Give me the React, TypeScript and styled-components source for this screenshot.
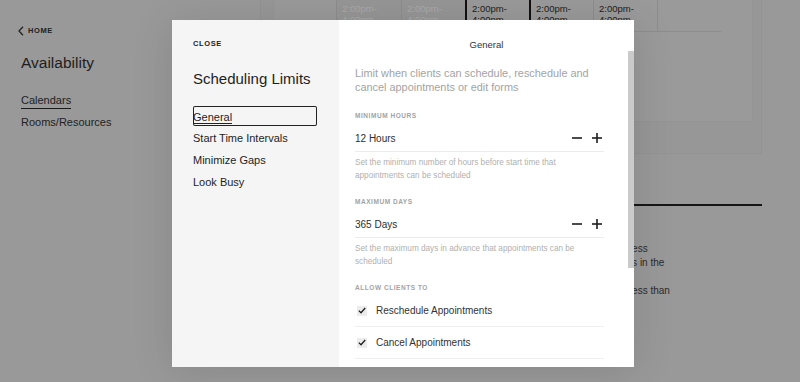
import styled, { createGlobalStyle, css } from "styled-components";

const GlobalStyle = createGlobalStyle`
  html, body {
    margin: 0;
    padding: 0;
    height: 100%;
    overflow: hidden;
  }
  body {
    font-family: "Liberation Sans", Arial, sans-serif;
    color: #222;
  }
  * { box-sizing: border-box; }
`;

/* ---------- background page (already dimmed by the modal backdrop) ---------- */

const Page = styled.div`
  display: flex;
  height: 100vh;
  background: #999;
  overflow: hidden;
`;

const Sidebar = styled.aside`
  width: 220px;
  flex-shrink: 0;
  padding: 26px 0 0 18px;
  color: #1e1e1e;
`;

const BackLink = styled.div`
  display: flex;
  align-items: center;
  gap: 4px;
  font-size: 7.5px;
  font-weight: 700;
  letter-spacing: 0.6px;
  line-height: 10px;
  color: #222;
`;

const PageTitle = styled.h1`
  margin: 18px 0 0 3px;
  font-size: 15.5px;
  font-weight: 400;
  line-height: 18px;
`;

const SideNav = styled.nav`
  display: flex;
  flex-direction: column;
  align-items: flex-start;
  gap: 6px;
  margin: 21px 0 0 3px;
`;

const SideNavItem = styled.span<{ $active?: boolean }>`
  font-size: 11px;
  line-height: 14px;
  color: #222;
  ${({ $active }) =>
    $active &&
    css`
      border-bottom: 1.5px solid #1a1a1a;
      padding-bottom: 1px;
    `}
`;

const Main = styled.main`
  width: 542px;
  padding-left: 40px;
`;

const OuterPanel = styled.section`
  margin-top: -40px;
  padding: 12px 8px 31px 12px;
  background: #979797;
  border: 1px solid #939393;
`;

const InnerPanel = styled.div`
  padding: 0 0 89px 62px;
  background: #9a9a9a;
  border: 1px solid #949494;
`;

const SlotGrid = styled.div`
  display: grid;
  grid-template-columns: repeat(6, 64px);
  width: 385px;
  border: 1px solid #8d8d8d;
  border-top: none;
`;

const Slot = styled.div<{ $state: "off" | "on" | "empty"; $marked?: boolean }>`
  height: 57px;
  display: flex;
  flex-direction: column;
  justify-content: flex-end;
  padding: 0 0 6px 5px;
  font-size: 9.5px;
  line-height: 11px;
  border-left: ${({ $marked }) => ($marked ? "2px solid #111" : "1px solid #8d8d8d")};
  color: ${({ $state }) => ($state === "off" ? "#aaa" : "#1c1c1c")};
  background: ${({ $state }) => ($state === "off" ? "#969696" : "#9a9a9a")};
  &:first-child {
    border-left: none;
  }
`;

const Divider = styled.hr`
  margin: 50px 0 0 0;
  border: none;
  height: 2px;
  background: #161616;
`;

const SettingRow = styled.div`
  display: grid;
  grid-template-columns: 356px 1fr;
  margin-top: 36px;
  font-size: 10px;
  line-height: 14px;
  color: #2a2a2a;
`;

const SettingName = styled.div`
  font-size: 11px;
`;

const SettingText = styled.div`
  white-space: nowrap;
  p {
    margin: 0 0 14px;
  }
`;

/* ---------- modal ---------- */

const Dialog = styled.div`
  position: fixed;
  left: 172px;
  top: 20px;
  width: 462px;
  height: 347px;
  display: grid;
  grid-template-columns: 167px 1fr;
  box-shadow: 0 4px 40px rgba(0, 0, 0, 0.12);
`;

const DialogNav = styled.div`
  background: #f5f5f5;
  padding: 19px 0 0 21px;
`;

const CloseButton = styled.button`
  display: block;
  border: none;
  background: none;
  padding: 0;
  font-family: inherit;
  font-size: 7.5px;
  font-weight: 700;
  letter-spacing: 0.6px;
  line-height: 10px;
  color: #222;
  cursor: pointer;
`;

const DialogTitle = styled.h2`
  margin: 21px 0 0;
  font-size: 15px;
  font-weight: 400;
  line-height: 18px;
  color: #1e1e1e;
`;

const TabList = styled.ul`
  list-style: none;
  margin: 18px 0 0;
  padding: 0;
`;

const Tab = styled.li<{ $active?: boolean }>`
  width: 124px;
  height: 20px;
  margin-bottom: 2px;
  display: flex;
  align-items: center;
  font-size: 11px;
  color: #1e1e1e;
  border-radius: 2px;
  ${({ $active }) =>
    $active &&
    css`
      box-shadow: inset 0 0 0 1px #222;
      span {
        border-bottom: 1px solid #222;
        padding-top: 2px;
      }
    `}
`;

const DialogBody = styled.div`
  position: relative;
  background: #fff;
  display: flex;
  flex-direction: column;
  min-height: 0;
`;

const BodyHeader = styled.div`
  height: 31px;
  padding-top: 19px;
  text-align: center;
  font-size: 9.5px;
  line-height: 11px;
  color: #333;
`;

const ScrollArea = styled.div`
  flex: 1;
  min-height: 0;
  overflow: hidden;
  padding: 15px 30px 0 16px;
`;

const ScrollThumb = styled.div`
  position: absolute;
  top: 31px;
  right: 0;
  width: 6px;
  height: 217px;
  background: #cacaca;
`;

const Lead = styled.p`
  margin: 0;
  font-size: 10.9px;
  line-height: 14px;
  color: #a3a3a3;
`;

const FieldLabel = styled.div<{ $gap?: number; $after?: number }>`
  margin-top: ${({ $gap }) => $gap ?? 15}px;
  margin-bottom: ${({ $after }) => $after ?? 4}px;
  font-size: 6.5px;
  font-weight: 700;
  letter-spacing: 0.55px;
  line-height: 10px;
  color: #a3a3a3;
`;

const StepperRow = styled.div`
  height: 27px;
  display: flex;
  align-items: center;
  justify-content: space-between;
  padding-right: 2px;
  border-bottom: 1px solid #ececec;
  font-size: 10px;
  color: #2e2e2e;
`;

const StepButtons = styled.div`
  display: flex;
  gap: 10px;
`;

const StepButton = styled.button`
  width: 10px;
  height: 10px;
  padding: 0;
  border: none;
  background: none;
  display: flex;
  cursor: pointer;
  color: #1e1e1e;
`;

const Hint = styled.p`
  margin: 4px 0 0;
  font-size: 8.2px;
  line-height: 13px;
  color: #b0b0b0;
`;

const CheckRow = styled.label`
  height: 32px;
  display: flex;
  align-items: center;
  gap: 9px;
  padding-left: 2px;
  border-bottom: 1px solid #efefef;
  font-size: 10px;
  color: #333;
`;

const CheckBox = styled.span`
  width: 10px;
  height: 10px;
  background: #ececec;
  display: flex;
  align-items: center;
  justify-content: center;
  color: #1e1e1e;
`;

function Stepper({ value }: { value: string }) {
  return (
    <StepperRow>
      <span>{value}</span>
      <StepButtons>
        <StepButton aria-label="Decrease">
          <svg width="10" height="10" viewBox="0 0 10 10">
            <line x1="0" y1="5" x2="10" y2="5" stroke="currentColor" strokeWidth="1.6" />
          </svg>
        </StepButton>
        <StepButton aria-label="Increase">
          <svg width="10" height="10" viewBox="0 0 10 10">
            <line x1="0" y1="5" x2="10" y2="5" stroke="currentColor" strokeWidth="1.6" />
            <line x1="5" y1="0" x2="5" y2="10" stroke="currentColor" strokeWidth="1.6" />
          </svg>
        </StepButton>
      </StepButtons>
    </StepperRow>
  );
}

function Check({ label }: { label: string }) {
  return (
    <CheckRow>
      <CheckBox>
        <svg width="8" height="7" viewBox="0 0 8 7">
          <polyline points="0.8,3.6 3,5.7 7.2,1" fill="none" stroke="currentColor" strokeWidth="1.3" />
        </svg>
      </CheckBox>
      {label}
    </CheckRow>
  );
}

const slots: { state: "off" | "on" | "empty"; marked?: boolean }[] = [
  { state: "off" },
  { state: "off" },
  { state: "on", marked: true },
  { state: "on", marked: true },
  { state: "on" },
  { state: "empty" },
];

export default function App() {
  return (
    <>
      <GlobalStyle />
      <Page>
        <Sidebar>
          <BackLink>
            <svg width="6" height="10" viewBox="0 0 6 10">
              <polyline points="5,0.8 1,5 5,9.2" fill="none" stroke="#222" strokeWidth="1.3" />
            </svg>
            HOME
          </BackLink>
          <PageTitle>Availability</PageTitle>
          <SideNav>
            <SideNavItem $active>Calendars</SideNavItem>
            <SideNavItem>Rooms/Resources</SideNavItem>
          </SideNav>
        </Sidebar>
        <Main>
          <OuterPanel>
            <InnerPanel>
              <SlotGrid>
                {slots.map((s, i) => (
                  <Slot key={i} $state={s.state} $marked={s.marked}>
                    {s.state !== "empty" && (
                      <>
                        <span>2:00pm-</span>
                        <span>4:00pm</span>
                      </>
                    )}
                  </Slot>
                ))}
              </SlotGrid>
            </InnerPanel>
          </OuterPanel>
          <Divider />
          <SettingRow>
            <SettingName>Scheduling limits</SettingName>
            <SettingText>
              <div>no less</div>
              <p>days in the</p>
              <div>be less than</div>
            </SettingText>
          </SettingRow>
        </Main>
      </Page>

      <Dialog role="dialog">
        <DialogNav>
          <CloseButton>CLOSE</CloseButton>
          <DialogTitle>Scheduling Limits</DialogTitle>
          <TabList>
            <Tab $active>
              <span>General</span>
            </Tab>
            <Tab>Start Time Intervals</Tab>
            <Tab>Minimize Gaps</Tab>
            <Tab>Look Busy</Tab>
          </TabList>
        </DialogNav>
        <DialogBody>
          <BodyHeader>General</BodyHeader>
          <ScrollArea>
            <Lead>Limit when clients can schedule, reschedule and cancel appointments or edit forms</Lead>
            <FieldLabel $gap={17}>MINIMUM HOURS</FieldLabel>
            <Stepper value="12 Hours" />
            <Hint>Set the minimum number of hours before start time that appointments can be scheduled</Hint>
            <FieldLabel $gap={15}>MAXIMUM DAYS</FieldLabel>
            <Stepper value="365 Days" />
            <Hint>Set the maximum days in advance that appointments can be scheduled</Hint>
            <FieldLabel $gap={15} $after={2}>ALLOW CLIENTS TO</FieldLabel>
            <Check label="Reschedule Appointments" />
            <Check label="Cancel Appointments" />
          </ScrollArea>
          <ScrollThumb />
        </DialogBody>
      </Dialog>
    </>
  );
}
